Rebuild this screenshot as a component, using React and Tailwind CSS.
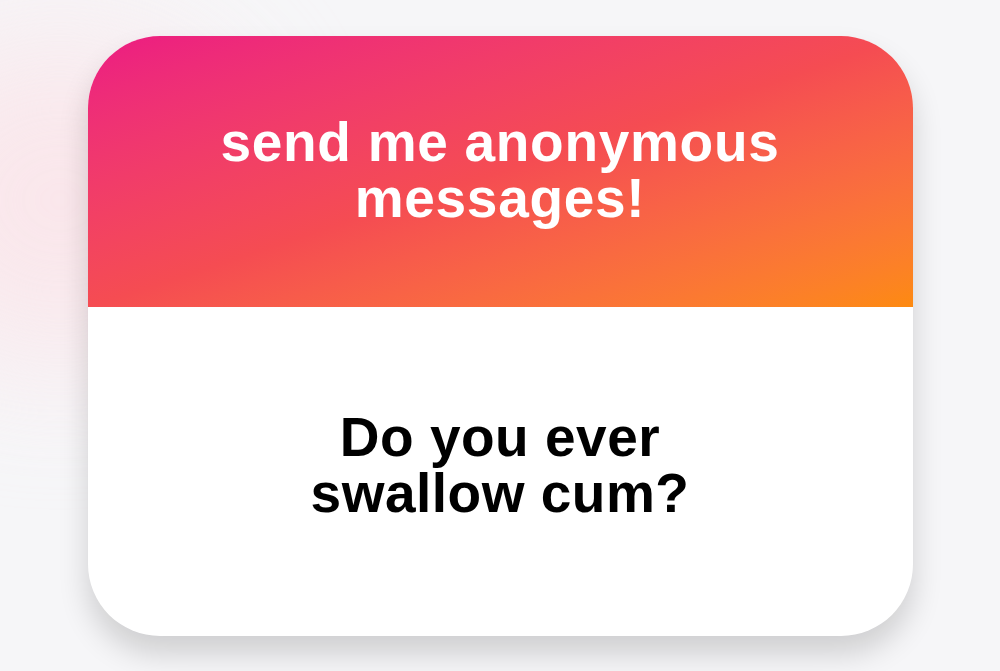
export default function App() {
  return (
    <div className="relative w-[1000px] h-[671px] overflow-hidden bg-[#f6f6f8] flex items-start justify-center pt-[36px]" style={{ fontFamily: '"Liberation Sans", Arial, sans-serif' }}>
      <div className="absolute -left-[120px] top-[40px] w-[360px] h-[320px] rounded-full bg-[#fbe3e8] blur-[70px] opacity-80" />
      <div className="relative w-[825px] h-[600px] rounded-[72px] overflow-hidden bg-white flex flex-col shadow-[0_18px_30px_rgba(0,0,0,0.16)]">
        <div className="h-[271px] bg-gradient-to-br from-[#ec1a82] via-[#f54c52] to-[#fd8a0e] flex items-center justify-center pb-[4px]">
          <h1 className="text-white text-center font-bold text-[55px] leading-[56px] tracking-[0.7px]">
            send me anonymous
            <br />
            messages!
          </h1>
        </div>
        <div className="flex-1 flex items-center justify-center pb-[14px]">
          <p className="text-black text-center font-bold text-[55px] leading-[56px] tracking-[0.5px]">
            Do you ever
            <br />
            swallow cum?
          </p>
        </div>
      </div>
    </div>
  );
}
